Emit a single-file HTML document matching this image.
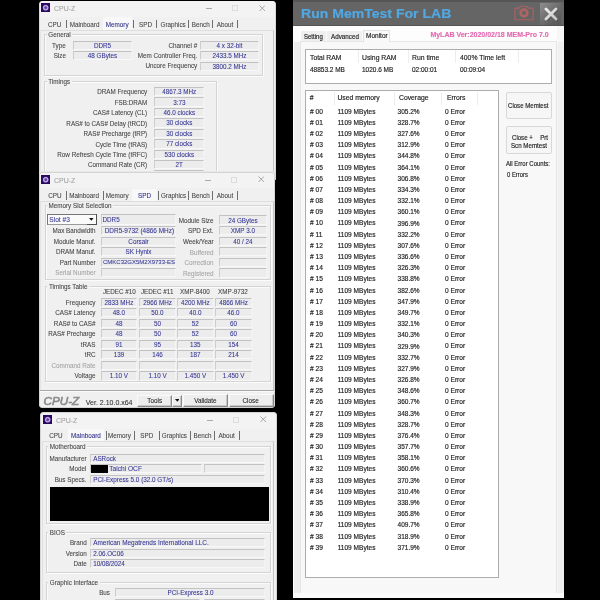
<!DOCTYPE html><html><head><meta charset="utf-8"><style>html,body{margin:0;padding:0;width:600px;height:600px;overflow:hidden;background:#000;}body{position:relative;font-family:"Liberation Sans", sans-serif;}div{position:absolute;box-sizing:border-box;}.t{white-space:nowrap;-webkit-text-stroke:0.07px currentColor;}.m .t{-webkit-text-stroke:0.16px currentColor;}#w{position:absolute;left:0;top:0;width:600px;height:600px;filter:blur(0.35px);will-change:transform;}</style></head><body><div id="w">
<div style="left:39px;top:0.5px;width:237px;height:179.5px;background:#f0f0f0;border-radius:3px 3px 0 0;border:1px solid #d8d8d8;"></div>
<div style="left:39.8px;top:1.2px;width:234.9px;height:15.8px;background:#f3f3f3;border-radius:3px 3px 0 0;"></div>
<svg style="position:absolute;left:40.8px;top:3px" width="9.4" height="9.4" viewBox="0 0 10 10"><rect width="10" height="10" fill="#2a0a5e"/><circle cx="5" cy="5" r="3.1" fill="#7e60bc"/><circle cx="5" cy="5" r="2.3" fill="none" stroke="#d8ccf0" stroke-width="0.9"/><circle cx="5" cy="5" r="1" fill="#5a3aa0"/></svg>
<div class="t" style="left:54px;top:4.25px;font-size:7.0px;line-height:9.1px;color:#a2a2a2;">CPU-Z</div>
<div style="left:205.5px;top:8px;width:6.0px;height:0.8px;background:#a8a8a8;"></div>
<div style="left:231.5px;top:5.2px;width:6.0px;height:6.0px;border:0.8px solid #dcdcdc;"></div>
<svg style="position:absolute;left:258.5px;top:4.5px" width="6.5" height="6.5" viewBox="0 0 7 7"><path d="M0.5 0.5L6.5 6.5M6.5 0.5L0.5 6.5" stroke="#8c8c8c" stroke-width="0.8"/></svg>
<div style="left:103.3px;top:17.3px;width:28.4px;height:12.7px;background:#f8f8f8;"></div>
<div class="t" style="left:48px;top:20.81px;font-size:6.3px;line-height:8.19px;color:#444444;">CPU</div>
<div class="t" style="left:69.7px;top:20.81px;font-size:6.3px;line-height:8.19px;color:#444444;">Mainboard</div>
<div class="t" style="left:105.8px;top:20.81px;font-size:6.3px;line-height:8.19px;color:#2c2c8c;">Memory</div>
<div class="t" style="left:139px;top:20.81px;font-size:6.3px;line-height:8.19px;color:#444444;">SPD</div>
<div class="t" style="left:160.5px;top:20.81px;font-size:6.3px;line-height:8.19px;color:#444444;">Graphics</div>
<div class="t" style="left:191.8px;top:20.81px;font-size:6.3px;line-height:8.19px;color:#444444;">Bench</div>
<div class="t" style="left:216.8px;top:20.81px;font-size:6.3px;line-height:8.19px;color:#444444;">About</div>
<div style="left:65.5px;top:19.9px;width:1.1px;height:8.6px;background:#6e6e6e;"></div>
<div style="left:133px;top:19.9px;width:1.1px;height:8.6px;background:#6e6e6e;"></div>
<div style="left:156px;top:19.9px;width:1.1px;height:8.6px;background:#6e6e6e;"></div>
<div style="left:188px;top:19.9px;width:1.1px;height:8.6px;background:#6e6e6e;"></div>
<div style="left:212.2px;top:19.9px;width:1.1px;height:8.6px;background:#6e6e6e;"></div>
<div style="left:237.3px;top:19.9px;width:1.1px;height:8.6px;background:#6e6e6e;"></div>
<div style="left:40px;top:30px;width:233.5px;height:150px;border-top:1px solid #dedede;border-right:1px solid #c6c6c6;border-left:1px solid #e4e4e4;"></div>
<div style="left:43.7px;top:34.3px;width:219.3px;height:41.8px;border:1px solid #d4d4d4;box-shadow:inset 1px 1px 0 #fbfbfb, 1px 1px 0 #fbfbfb;"></div>
<div class="t" style="left:46.8px;top:31.4px;font-size:6.3px;line-height:8px;color:#444444;background:#f0f0f0;padding:0 1.5px;">General</div>
<div class="t" style="left:52px;top:41.71px;font-size:6.3px;line-height:8.19px;color:#444444;">Type</div>
<div class="t" style="right:534px;top:52.01px;font-size:6.3px;line-height:8.19px;color:#444444;text-align:right;">Size</div>
<div style="left:73px;top:40.5px;width:59px;height:9.3px;background:#ececec;border-top:1px solid #c2c2c2;border-left:1px solid #cdcdcd;border-bottom:1px solid #f8f8f8;border-right:1px solid #f4f4f4;"></div>
<div class="t" style="left:53.0px;width:99px;top:41.66px;font-size:6.3px;line-height:8.19px;color:#363696;text-align:center;">DDR5</div>
<div style="left:73px;top:51px;width:59px;height:9.2px;background:#ececec;border-top:1px solid #c2c2c2;border-left:1px solid #cdcdcd;border-bottom:1px solid #f8f8f8;border-right:1px solid #f4f4f4;"></div>
<div class="t" style="left:53.0px;width:99px;top:52.11px;font-size:6.3px;line-height:8.19px;color:#363696;text-align:center;">48 GBytes</div>
<div class="t" style="right:402.8px;top:42.11px;font-size:6.3px;line-height:8.19px;color:#444444;text-align:right;">Channel #</div>
<div class="t" style="right:402.8px;top:52.3px;font-size:6.3px;line-height:8.19px;color:#444444;text-align:right;">Mem Controller Freq.</div>
<div class="t" style="right:402.8px;top:62.41px;font-size:6.3px;line-height:8.19px;color:#444444;text-align:right;">Uncore Frequency</div>
<div style="left:200px;top:40.7px;width:59px;height:9.3px;background:#ececec;border-top:1px solid #c2c2c2;border-left:1px solid #cdcdcd;border-bottom:1px solid #f8f8f8;border-right:1px solid #f4f4f4;"></div>
<div class="t" style="left:180.0px;width:99px;top:41.86px;font-size:6.3px;line-height:8.19px;color:#363696;text-align:center;">4 x 32-bit</div>
<div style="left:200px;top:51.2px;width:59px;height:9.3px;background:#ececec;border-top:1px solid #c2c2c2;border-left:1px solid #cdcdcd;border-bottom:1px solid #f8f8f8;border-right:1px solid #f4f4f4;"></div>
<div class="t" style="left:180.0px;width:99px;top:52.36px;font-size:6.3px;line-height:8.19px;color:#363696;text-align:center;">2433.5 MHz</div>
<div style="left:200px;top:61.7px;width:59px;height:9.3px;background:#ececec;border-top:1px solid #c2c2c2;border-left:1px solid #cdcdcd;border-bottom:1px solid #f8f8f8;border-right:1px solid #f4f4f4;"></div>
<div class="t" style="left:180.0px;width:99px;top:62.85px;font-size:6.3px;line-height:8.19px;color:#363696;text-align:center;">3800.2 MHz</div>
<div style="left:43.7px;top:81px;width:173.3px;height:119px;border:1px solid #d4d4d4;box-shadow:inset 1px 1px 0 #fbfbfb, 1px 1px 0 #fbfbfb;"></div>
<div class="t" style="left:46.8px;top:78.1px;font-size:6.3px;line-height:8px;color:#444444;background:#f0f0f0;padding:0 1.5px;">Timings</div>
<div class="t" style="right:452.8px;top:88.41px;font-size:6.3px;line-height:8.19px;color:#444444;text-align:right;">DRAM Frequency</div>
<div style="left:154.2px;top:86.9px;width:50.2px;height:9.5px;background:#ececec;border-top:1px solid #c2c2c2;border-left:1px solid #cdcdcd;border-bottom:1px solid #f8f8f8;border-right:1px solid #f4f4f4;"></div>
<div class="t" style="left:134.2px;width:90.20000000000002px;top:88.16px;font-size:6.3px;line-height:8.19px;color:#363696;text-align:center;">4867.3 MHz</div>
<div class="t" style="right:452.8px;top:98.84px;font-size:6.3px;line-height:8.19px;color:#444444;text-align:right;">FSB:DRAM</div>
<div style="left:154.2px;top:97.34px;width:50.2px;height:9.5px;background:#ececec;border-top:1px solid #c2c2c2;border-left:1px solid #cdcdcd;border-bottom:1px solid #f8f8f8;border-right:1px solid #f4f4f4;"></div>
<div class="t" style="left:134.2px;width:90.20000000000002px;top:98.59px;font-size:6.3px;line-height:8.19px;color:#363696;text-align:center;">3:73</div>
<div class="t" style="right:452.8px;top:109.28px;font-size:6.3px;line-height:8.19px;color:#444444;text-align:right;">CAS# Latency (CL)</div>
<div style="left:154.2px;top:107.78px;width:50.2px;height:9.5px;background:#ececec;border-top:1px solid #c2c2c2;border-left:1px solid #cdcdcd;border-bottom:1px solid #f8f8f8;border-right:1px solid #f4f4f4;"></div>
<div class="t" style="left:134.2px;width:90.20000000000002px;top:109.03px;font-size:6.3px;line-height:8.19px;color:#363696;text-align:center;">46.0 clocks</div>
<div class="t" style="right:452.8px;top:119.72px;font-size:6.3px;line-height:8.19px;color:#444444;text-align:right;">RAS# to CAS# Delay (tRCD)</div>
<div style="left:154.2px;top:118.22px;width:50.2px;height:9.5px;background:#ececec;border-top:1px solid #c2c2c2;border-left:1px solid #cdcdcd;border-bottom:1px solid #f8f8f8;border-right:1px solid #f4f4f4;"></div>
<div class="t" style="left:134.2px;width:90.20000000000002px;top:119.47px;font-size:6.3px;line-height:8.19px;color:#363696;text-align:center;">30 clocks</div>
<div class="t" style="right:452.8px;top:130.16px;font-size:6.3px;line-height:8.19px;color:#444444;text-align:right;">RAS# Precharge (tRP)</div>
<div style="left:154.2px;top:128.66px;width:50.2px;height:9.5px;background:#ececec;border-top:1px solid #c2c2c2;border-left:1px solid #cdcdcd;border-bottom:1px solid #f8f8f8;border-right:1px solid #f4f4f4;"></div>
<div class="t" style="left:134.2px;width:90.20000000000002px;top:129.91px;font-size:6.3px;line-height:8.19px;color:#363696;text-align:center;">30 clocks</div>
<div class="t" style="right:452.8px;top:140.6px;font-size:6.3px;line-height:8.19px;color:#444444;text-align:right;">Cycle Time (tRAS)</div>
<div style="left:154.2px;top:139.1px;width:50.2px;height:9.5px;background:#ececec;border-top:1px solid #c2c2c2;border-left:1px solid #cdcdcd;border-bottom:1px solid #f8f8f8;border-right:1px solid #f4f4f4;"></div>
<div class="t" style="left:134.2px;width:90.20000000000002px;top:140.35px;font-size:6.3px;line-height:8.19px;color:#363696;text-align:center;">77 clocks</div>
<div class="t" style="right:452.8px;top:151.05px;font-size:6.3px;line-height:8.19px;color:#444444;text-align:right;">Row Refresh Cycle Time (tRFC)</div>
<div style="left:154.2px;top:149.54px;width:50.2px;height:9.5px;background:#ececec;border-top:1px solid #c2c2c2;border-left:1px solid #cdcdcd;border-bottom:1px solid #f8f8f8;border-right:1px solid #f4f4f4;"></div>
<div class="t" style="left:134.2px;width:90.20000000000002px;top:150.8px;font-size:6.3px;line-height:8.19px;color:#363696;text-align:center;">530 clocks</div>
<div class="t" style="right:452.8px;top:161.49px;font-size:6.3px;line-height:8.19px;color:#444444;text-align:right;">Command Rate (CR)</div>
<div style="left:154.2px;top:159.98px;width:50.2px;height:9.5px;background:#ececec;border-top:1px solid #c2c2c2;border-left:1px solid #cdcdcd;border-bottom:1px solid #f8f8f8;border-right:1px solid #f4f4f4;"></div>
<div class="t" style="left:134.2px;width:90.20000000000002px;top:161.24px;font-size:6.3px;line-height:8.19px;color:#363696;text-align:center;">2T</div>
<div style="left:154.2px;top:170.42px;width:50.2px;height:9.5px;background:#ececec;border-top:1px solid #c2c2c2;border-left:1px solid #cdcdcd;border-bottom:1px solid #f8f8f8;border-right:1px solid #f4f4f4;"></div>
<div style="left:39px;top:172px;width:235.8px;height:236px;background:#f0f0f0;border-radius:3px;border:1px solid #d4d4d4;box-shadow:0 -1px 0 #e8e8e8;"></div>
<div style="left:39.8px;top:172.8px;width:234.2px;height:15.7px;background:#f3f3f3;border-radius:3px 3px 0 0;"></div>
<svg style="position:absolute;left:40.8px;top:174.5px" width="9.4" height="9.4" viewBox="0 0 10 10"><rect width="10" height="10" fill="#2a0a5e"/><circle cx="5" cy="5" r="3.1" fill="#7e60bc"/><circle cx="5" cy="5" r="2.3" fill="none" stroke="#d8ccf0" stroke-width="0.9"/><circle cx="5" cy="5" r="1" fill="#5a3aa0"/></svg>
<div class="t" style="left:54px;top:175.75px;font-size:7.0px;line-height:9.1px;color:#a2a2a2;">CPU-Z</div>
<div style="left:204.8px;top:179.5px;width:6.0px;height:0.8px;background:#a8a8a8;"></div>
<div style="left:230.8px;top:176.7px;width:6.0px;height:6.0px;border:0.8px solid #dcdcdc;"></div>
<svg style="position:absolute;left:257.8px;top:176.0px" width="6.5" height="6.5" viewBox="0 0 7 7"><path d="M0.5 0.5L6.5 6.5M6.5 0.5L0.5 6.5" stroke="#8c8c8c" stroke-width="0.8"/></svg>
<div style="left:132.2px;top:188.5px;width:24.5px;height:12.8px;background:#f8f8f8;"></div>
<div class="t" style="left:48.2px;top:192.1px;font-size:6.3px;line-height:8.19px;color:#444444;">CPU</div>
<div class="t" style="left:69.2px;top:192.1px;font-size:6.3px;line-height:8.19px;color:#444444;">Mainboard</div>
<div class="t" style="left:105.8px;top:192.1px;font-size:6.3px;line-height:8.19px;color:#444444;">Memory</div>
<div class="t" style="left:138px;top:192.1px;font-size:6.3px;line-height:8.19px;color:#2c2c8c;">SPD</div>
<div class="t" style="left:160.9px;top:192.1px;font-size:6.3px;line-height:8.19px;color:#444444;">Graphics</div>
<div class="t" style="left:191.8px;top:192.1px;font-size:6.3px;line-height:8.19px;color:#444444;">Bench</div>
<div class="t" style="left:216.8px;top:192.1px;font-size:6.3px;line-height:8.19px;color:#444444;">About</div>
<div style="left:66.4px;top:191.2px;width:1.1px;height:8.6px;background:#6e6e6e;"></div>
<div style="left:103px;top:191.2px;width:1.1px;height:8.6px;background:#6e6e6e;"></div>
<div style="left:157.8px;top:191.2px;width:1.1px;height:8.6px;background:#6e6e6e;"></div>
<div style="left:188px;top:191.2px;width:1.1px;height:8.6px;background:#6e6e6e;"></div>
<div style="left:212.2px;top:191.2px;width:1.1px;height:8.6px;background:#6e6e6e;"></div>
<div style="left:237.3px;top:191.2px;width:1.1px;height:8.6px;background:#6e6e6e;"></div>
<div style="left:40px;top:201.3px;width:233.7px;height:189.2px;border-top:1px solid #dedede;border-right:1px solid #c6c6c6;border-left:1px solid #e4e4e4;"></div>
<div style="left:44.7px;top:205.3px;width:225.9px;height:74.7px;border:1px solid #d4d4d4;box-shadow:inset 1px 1px 0 #fbfbfb, 1px 1px 0 #fbfbfb;"></div>
<div class="t" style="left:47.0px;top:202.4px;font-size:6.3px;line-height:8px;color:#444444;background:#f0f0f0;padding:0 1.5px;">Memory Slot Selection</div>
<div style="left:47px;top:213.5px;width:50.2px;height:11.6px;background:#fafafa;border:1px solid #767676;border-bottom-color:#9a9a9a;"></div>
<div style="left:86.7px;top:223.6px;width:10.5px;height:1.5px;background:#505050;"></div>
<div style="left:96px;top:213.5px;width:1.2px;height:11.6px;background:#505050;"></div>
<svg style="position:absolute;left:89.3px;top:218.3px" width="4.6" height="2.8" viewBox="0 0 5 3"><path d="M0 0H5L2.5 3Z" fill="#111"/></svg>
<div class="t" style="left:49.3px;top:215.81px;font-size:6.6px;line-height:8.58px;color:#363696;">Slot #3</div>
<div style="left:100.7px;top:214.2px;width:75.8px;height:10.5px;background:#ececec;border-top:1px solid #c2c2c2;border-left:1px solid #cdcdcd;border-bottom:1px solid #f8f8f8;border-right:1px solid #f4f4f4;"></div>
<div class="t" style="left:102.5px;top:215.95px;font-size:6.3px;line-height:8.19px;color:#363696;">DDR5</div>
<div class="t" style="right:504.5px;top:227.31px;font-size:6.3px;line-height:8.19px;color:#444444;text-align:right;">Max Bandwidth</div>
<div style="left:101.1px;top:226.2px;width:75.4px;height:9.2px;background:#ececec;border-top:1px solid #c2c2c2;border-left:1px solid #cdcdcd;border-bottom:1px solid #f8f8f8;border-right:1px solid #f4f4f4;"></div>
<div class="t" style="left:104.7px;top:227.21px;font-size:6.45px;line-height:8.38px;color:#363696;">DDR5-9732 (4866 MHz)</div>
<div class="t" style="right:504.5px;top:237.81px;font-size:6.3px;line-height:8.19px;color:#444444;text-align:right;">Module Manuf.</div>
<div style="left:101.1px;top:236.7px;width:75.4px;height:9.2px;background:#ececec;border-top:1px solid #c2c2c2;border-left:1px solid #cdcdcd;border-bottom:1px solid #f8f8f8;border-right:1px solid #f4f4f4;"></div>
<div class="t" style="left:80.8px;width:115.4px;top:237.81px;font-size:6.3px;line-height:8.19px;color:#363696;text-align:center;">Corsair</div>
<div class="t" style="right:504.5px;top:248.31px;font-size:6.3px;line-height:8.19px;color:#444444;text-align:right;">DRAM Manuf.</div>
<div style="left:101.1px;top:247.2px;width:75.4px;height:9.2px;background:#ececec;border-top:1px solid #c2c2c2;border-left:1px solid #cdcdcd;border-bottom:1px solid #f8f8f8;border-right:1px solid #f4f4f4;"></div>
<div class="t" style="left:80.8px;width:115.4px;top:248.31px;font-size:6.3px;line-height:8.19px;color:#363696;text-align:center;">SK Hynix</div>
<div class="t" style="right:504.5px;top:258.81px;font-size:6.3px;line-height:8.19px;color:#444444;text-align:right;">Part Number</div>
<div style="left:101.1px;top:257.7px;width:75.4px;height:9.2px;background:#ececec;border-top:1px solid #c2c2c2;border-left:1px solid #cdcdcd;border-bottom:1px solid #f8f8f8;border-right:1px solid #f4f4f4;"></div>
<div class="t" style="left:103px;top:259.0px;font-size:6.0px;line-height:7.8px;color:#363696;">CMKC32GX5M2X9733-ES</div>
<div class="t" style="right:504.5px;top:269.31px;font-size:6.3px;line-height:8.19px;color:#a4a4a4;text-align:right;">Serial Number</div>
<div style="left:101.1px;top:268.2px;width:75.4px;height:9.2px;background:#ececec;border-top:1px solid #c2c2c2;border-left:1px solid #cdcdcd;border-bottom:1px solid #f8f8f8;border-right:1px solid #f4f4f4;"></div>
<div class="t" style="right:386.5px;top:216.7px;font-size:6.3px;line-height:8.19px;color:#444444;text-align:right;">Module Size</div>
<div style="left:218.6px;top:215.4px;width:48.6px;height:9.2px;background:#ececec;border-top:1px solid #c2c2c2;border-left:1px solid #cdcdcd;border-bottom:1px solid #f8f8f8;border-right:1px solid #f4f4f4;"></div>
<div class="t" style="left:198.6px;width:88.6px;top:216.5px;font-size:6.3px;line-height:8.19px;color:#363696;text-align:center;">24 GBytes</div>
<div class="t" style="right:386.5px;top:227.3px;font-size:6.3px;line-height:8.19px;color:#444444;text-align:right;">SPD Ext.</div>
<div style="left:218.6px;top:226.0px;width:48.6px;height:9.2px;background:#ececec;border-top:1px solid #c2c2c2;border-left:1px solid #cdcdcd;border-bottom:1px solid #f8f8f8;border-right:1px solid #f4f4f4;"></div>
<div class="t" style="left:198.6px;width:88.6px;top:227.1px;font-size:6.3px;line-height:8.19px;color:#363696;text-align:center;">XMP 3.0</div>
<div class="t" style="right:386.5px;top:237.9px;font-size:6.3px;line-height:8.19px;color:#444444;text-align:right;">Week/Year</div>
<div style="left:218.6px;top:236.6px;width:48.6px;height:9.2px;background:#ececec;border-top:1px solid #c2c2c2;border-left:1px solid #cdcdcd;border-bottom:1px solid #f8f8f8;border-right:1px solid #f4f4f4;"></div>
<div class="t" style="left:198.6px;width:88.6px;top:237.7px;font-size:6.3px;line-height:8.19px;color:#363696;text-align:center;">40 / 24</div>
<div class="t" style="right:386.5px;top:248.5px;font-size:6.3px;line-height:8.19px;color:#a4a4a4;text-align:right;">Buffered</div>
<div style="left:218.6px;top:247.2px;width:48.6px;height:9.2px;background:#ececec;border-top:1px solid #c2c2c2;border-left:1px solid #cdcdcd;border-bottom:1px solid #f8f8f8;border-right:1px solid #f4f4f4;"></div>
<div class="t" style="right:386.5px;top:259.1px;font-size:6.3px;line-height:8.19px;color:#a4a4a4;text-align:right;">Correction</div>
<div style="left:218.6px;top:257.8px;width:48.6px;height:9.2px;background:#ececec;border-top:1px solid #c2c2c2;border-left:1px solid #cdcdcd;border-bottom:1px solid #f8f8f8;border-right:1px solid #f4f4f4;"></div>
<div class="t" style="right:386.5px;top:269.7px;font-size:6.3px;line-height:8.19px;color:#a4a4a4;text-align:right;">Registered</div>
<div style="left:218.6px;top:268.4px;width:48.6px;height:9.2px;background:#ececec;border-top:1px solid #c2c2c2;border-left:1px solid #cdcdcd;border-bottom:1px solid #f8f8f8;border-right:1px solid #f4f4f4;"></div>
<div style="left:44.7px;top:285.6px;width:225.9px;height:96.6px;border:1px solid #d4d4d4;box-shadow:inset 1px 1px 0 #fbfbfb, 1px 1px 0 #fbfbfb;"></div>
<div class="t" style="left:47.4px;top:282.7px;font-size:6.3px;line-height:8px;color:#444444;background:#f0f0f0;padding:0 1.5px;">Timings Table</div>
<div class="t" style="left:89.4px;width:60px;top:288.2px;font-size:6.3px;line-height:8.19px;color:#444444;text-align:center;">JEDEC #10</div>
<div class="t" style="left:127.2px;width:60px;top:288.2px;font-size:6.3px;line-height:8.19px;color:#444444;text-align:center;">JEDEC #11</div>
<div class="t" style="left:165.0px;width:60px;top:288.2px;font-size:6.3px;line-height:8.19px;color:#444444;text-align:center;">XMP-8400</div>
<div class="t" style="left:203.0px;width:60px;top:288.2px;font-size:6.3px;line-height:8.19px;color:#444444;text-align:center;">XMP-9732</div>
<div class="t" style="right:504.5px;top:298.7px;font-size:6.3px;line-height:8.19px;color:#444444;text-align:right;">Frequency</div>
<div style="left:101.1px;top:297.7px;width:35.7px;height:9.1px;background:#ececec;border-top:1px solid #c2c2c2;border-left:1px solid #cdcdcd;border-bottom:1px solid #f8f8f8;border-right:1px solid #f4f4f4;"></div>
<div class="t" style="left:81.1px;width:75.70000000000002px;top:298.75px;font-size:6.3px;line-height:8.19px;color:#363696;text-align:center;">2833 MHz</div>
<div style="left:139.2px;top:297.7px;width:36.6px;height:9.1px;background:#ececec;border-top:1px solid #c2c2c2;border-left:1px solid #cdcdcd;border-bottom:1px solid #f8f8f8;border-right:1px solid #f4f4f4;"></div>
<div class="t" style="left:119.2px;width:76.60000000000002px;top:298.75px;font-size:6.3px;line-height:8.19px;color:#363696;text-align:center;">2966 MHz</div>
<div style="left:177px;top:297.7px;width:36.7px;height:9.1px;background:#ececec;border-top:1px solid #c2c2c2;border-left:1px solid #cdcdcd;border-bottom:1px solid #f8f8f8;border-right:1px solid #f4f4f4;"></div>
<div class="t" style="left:157.0px;width:76.69999999999999px;top:298.75px;font-size:6.3px;line-height:8.19px;color:#363696;text-align:center;">4200 MHz</div>
<div style="left:215px;top:297.7px;width:37px;height:9.1px;background:#ececec;border-top:1px solid #c2c2c2;border-left:1px solid #cdcdcd;border-bottom:1px solid #f8f8f8;border-right:1px solid #f4f4f4;"></div>
<div class="t" style="left:195.0px;width:77px;top:298.75px;font-size:6.3px;line-height:8.19px;color:#363696;text-align:center;">4866 MHz</div>
<div class="t" style="right:504.5px;top:309.23px;font-size:6.3px;line-height:8.19px;color:#444444;text-align:right;">CAS# Latency</div>
<div style="left:101.1px;top:308.23px;width:35.7px;height:9.1px;background:#ececec;border-top:1px solid #c2c2c2;border-left:1px solid #cdcdcd;border-bottom:1px solid #f8f8f8;border-right:1px solid #f4f4f4;"></div>
<div class="t" style="left:81.1px;width:75.70000000000002px;top:309.28px;font-size:6.3px;line-height:8.19px;color:#363696;text-align:center;">48.0</div>
<div style="left:139.2px;top:308.23px;width:36.6px;height:9.1px;background:#ececec;border-top:1px solid #c2c2c2;border-left:1px solid #cdcdcd;border-bottom:1px solid #f8f8f8;border-right:1px solid #f4f4f4;"></div>
<div class="t" style="left:119.2px;width:76.60000000000002px;top:309.28px;font-size:6.3px;line-height:8.19px;color:#363696;text-align:center;">50.0</div>
<div style="left:177px;top:308.23px;width:36.7px;height:9.1px;background:#ececec;border-top:1px solid #c2c2c2;border-left:1px solid #cdcdcd;border-bottom:1px solid #f8f8f8;border-right:1px solid #f4f4f4;"></div>
<div class="t" style="left:157.0px;width:76.69999999999999px;top:309.28px;font-size:6.3px;line-height:8.19px;color:#363696;text-align:center;">40.0</div>
<div style="left:215px;top:308.23px;width:37px;height:9.1px;background:#ececec;border-top:1px solid #c2c2c2;border-left:1px solid #cdcdcd;border-bottom:1px solid #f8f8f8;border-right:1px solid #f4f4f4;"></div>
<div class="t" style="left:195.0px;width:77px;top:309.28px;font-size:6.3px;line-height:8.19px;color:#363696;text-align:center;">46.0</div>
<div class="t" style="right:504.5px;top:319.76px;font-size:6.3px;line-height:8.19px;color:#444444;text-align:right;">RAS# to CAS#</div>
<div style="left:101.1px;top:318.76px;width:35.7px;height:9.1px;background:#ececec;border-top:1px solid #c2c2c2;border-left:1px solid #cdcdcd;border-bottom:1px solid #f8f8f8;border-right:1px solid #f4f4f4;"></div>
<div class="t" style="left:81.1px;width:75.70000000000002px;top:319.81px;font-size:6.3px;line-height:8.19px;color:#363696;text-align:center;">48</div>
<div style="left:139.2px;top:318.76px;width:36.6px;height:9.1px;background:#ececec;border-top:1px solid #c2c2c2;border-left:1px solid #cdcdcd;border-bottom:1px solid #f8f8f8;border-right:1px solid #f4f4f4;"></div>
<div class="t" style="left:119.2px;width:76.60000000000002px;top:319.81px;font-size:6.3px;line-height:8.19px;color:#363696;text-align:center;">50</div>
<div style="left:177px;top:318.76px;width:36.7px;height:9.1px;background:#ececec;border-top:1px solid #c2c2c2;border-left:1px solid #cdcdcd;border-bottom:1px solid #f8f8f8;border-right:1px solid #f4f4f4;"></div>
<div class="t" style="left:157.0px;width:76.69999999999999px;top:319.81px;font-size:6.3px;line-height:8.19px;color:#363696;text-align:center;">52</div>
<div style="left:215px;top:318.76px;width:37px;height:9.1px;background:#ececec;border-top:1px solid #c2c2c2;border-left:1px solid #cdcdcd;border-bottom:1px solid #f8f8f8;border-right:1px solid #f4f4f4;"></div>
<div class="t" style="left:195.0px;width:77px;top:319.81px;font-size:6.3px;line-height:8.19px;color:#363696;text-align:center;">60</div>
<div class="t" style="right:504.5px;top:330.29px;font-size:6.3px;line-height:8.19px;color:#444444;text-align:right;">RAS# Precharge</div>
<div style="left:101.1px;top:329.29px;width:35.7px;height:9.1px;background:#ececec;border-top:1px solid #c2c2c2;border-left:1px solid #cdcdcd;border-bottom:1px solid #f8f8f8;border-right:1px solid #f4f4f4;"></div>
<div class="t" style="left:81.1px;width:75.70000000000002px;top:330.34px;font-size:6.3px;line-height:8.19px;color:#363696;text-align:center;">48</div>
<div style="left:139.2px;top:329.29px;width:36.6px;height:9.1px;background:#ececec;border-top:1px solid #c2c2c2;border-left:1px solid #cdcdcd;border-bottom:1px solid #f8f8f8;border-right:1px solid #f4f4f4;"></div>
<div class="t" style="left:119.2px;width:76.60000000000002px;top:330.34px;font-size:6.3px;line-height:8.19px;color:#363696;text-align:center;">50</div>
<div style="left:177px;top:329.29px;width:36.7px;height:9.1px;background:#ececec;border-top:1px solid #c2c2c2;border-left:1px solid #cdcdcd;border-bottom:1px solid #f8f8f8;border-right:1px solid #f4f4f4;"></div>
<div class="t" style="left:157.0px;width:76.69999999999999px;top:330.34px;font-size:6.3px;line-height:8.19px;color:#363696;text-align:center;">52</div>
<div style="left:215px;top:329.29px;width:37px;height:9.1px;background:#ececec;border-top:1px solid #c2c2c2;border-left:1px solid #cdcdcd;border-bottom:1px solid #f8f8f8;border-right:1px solid #f4f4f4;"></div>
<div class="t" style="left:195.0px;width:77px;top:330.34px;font-size:6.3px;line-height:8.19px;color:#363696;text-align:center;">60</div>
<div class="t" style="right:504.5px;top:340.82px;font-size:6.3px;line-height:8.19px;color:#444444;text-align:right;">tRAS</div>
<div style="left:101.1px;top:339.82px;width:35.7px;height:9.1px;background:#ececec;border-top:1px solid #c2c2c2;border-left:1px solid #cdcdcd;border-bottom:1px solid #f8f8f8;border-right:1px solid #f4f4f4;"></div>
<div class="t" style="left:81.1px;width:75.70000000000002px;top:340.88px;font-size:6.3px;line-height:8.19px;color:#363696;text-align:center;">91</div>
<div style="left:139.2px;top:339.82px;width:36.6px;height:9.1px;background:#ececec;border-top:1px solid #c2c2c2;border-left:1px solid #cdcdcd;border-bottom:1px solid #f8f8f8;border-right:1px solid #f4f4f4;"></div>
<div class="t" style="left:119.2px;width:76.60000000000002px;top:340.88px;font-size:6.3px;line-height:8.19px;color:#363696;text-align:center;">95</div>
<div style="left:177px;top:339.82px;width:36.7px;height:9.1px;background:#ececec;border-top:1px solid #c2c2c2;border-left:1px solid #cdcdcd;border-bottom:1px solid #f8f8f8;border-right:1px solid #f4f4f4;"></div>
<div class="t" style="left:157.0px;width:76.69999999999999px;top:340.88px;font-size:6.3px;line-height:8.19px;color:#363696;text-align:center;">135</div>
<div style="left:215px;top:339.82px;width:37px;height:9.1px;background:#ececec;border-top:1px solid #c2c2c2;border-left:1px solid #cdcdcd;border-bottom:1px solid #f8f8f8;border-right:1px solid #f4f4f4;"></div>
<div class="t" style="left:195.0px;width:77px;top:340.88px;font-size:6.3px;line-height:8.19px;color:#363696;text-align:center;">154</div>
<div class="t" style="right:504.5px;top:351.35px;font-size:6.3px;line-height:8.19px;color:#444444;text-align:right;">tRC</div>
<div style="left:101.1px;top:350.35px;width:35.7px;height:9.1px;background:#ececec;border-top:1px solid #c2c2c2;border-left:1px solid #cdcdcd;border-bottom:1px solid #f8f8f8;border-right:1px solid #f4f4f4;"></div>
<div class="t" style="left:81.1px;width:75.70000000000002px;top:351.4px;font-size:6.3px;line-height:8.19px;color:#363696;text-align:center;">139</div>
<div style="left:139.2px;top:350.35px;width:36.6px;height:9.1px;background:#ececec;border-top:1px solid #c2c2c2;border-left:1px solid #cdcdcd;border-bottom:1px solid #f8f8f8;border-right:1px solid #f4f4f4;"></div>
<div class="t" style="left:119.2px;width:76.60000000000002px;top:351.4px;font-size:6.3px;line-height:8.19px;color:#363696;text-align:center;">146</div>
<div style="left:177px;top:350.35px;width:36.7px;height:9.1px;background:#ececec;border-top:1px solid #c2c2c2;border-left:1px solid #cdcdcd;border-bottom:1px solid #f8f8f8;border-right:1px solid #f4f4f4;"></div>
<div class="t" style="left:157.0px;width:76.69999999999999px;top:351.4px;font-size:6.3px;line-height:8.19px;color:#363696;text-align:center;">187</div>
<div style="left:215px;top:350.35px;width:37px;height:9.1px;background:#ececec;border-top:1px solid #c2c2c2;border-left:1px solid #cdcdcd;border-bottom:1px solid #f8f8f8;border-right:1px solid #f4f4f4;"></div>
<div class="t" style="left:195.0px;width:77px;top:351.4px;font-size:6.3px;line-height:8.19px;color:#363696;text-align:center;">214</div>
<div class="t" style="right:504.5px;top:361.88px;font-size:6.3px;line-height:8.19px;color:#a4a4a4;text-align:right;">Command Rate</div>
<div style="left:101.1px;top:360.88px;width:35.7px;height:9.1px;background:#ececec;border-top:1px solid #c2c2c2;border-left:1px solid #cdcdcd;border-bottom:1px solid #f8f8f8;border-right:1px solid #f4f4f4;"></div>
<div style="left:139.2px;top:360.88px;width:36.6px;height:9.1px;background:#ececec;border-top:1px solid #c2c2c2;border-left:1px solid #cdcdcd;border-bottom:1px solid #f8f8f8;border-right:1px solid #f4f4f4;"></div>
<div style="left:177px;top:360.88px;width:36.7px;height:9.1px;background:#ececec;border-top:1px solid #c2c2c2;border-left:1px solid #cdcdcd;border-bottom:1px solid #f8f8f8;border-right:1px solid #f4f4f4;"></div>
<div style="left:215px;top:360.88px;width:37px;height:9.1px;background:#ececec;border-top:1px solid #c2c2c2;border-left:1px solid #cdcdcd;border-bottom:1px solid #f8f8f8;border-right:1px solid #f4f4f4;"></div>
<div class="t" style="right:504.5px;top:372.41px;font-size:6.3px;line-height:8.19px;color:#444444;text-align:right;">Voltage</div>
<div style="left:101.1px;top:371.41px;width:35.7px;height:9.1px;background:#ececec;border-top:1px solid #c2c2c2;border-left:1px solid #cdcdcd;border-bottom:1px solid #f8f8f8;border-right:1px solid #f4f4f4;"></div>
<div class="t" style="left:81.1px;width:75.70000000000002px;top:372.46px;font-size:6.3px;line-height:8.19px;color:#363696;text-align:center;">1.10 V</div>
<div style="left:139.2px;top:371.41px;width:36.6px;height:9.1px;background:#ececec;border-top:1px solid #c2c2c2;border-left:1px solid #cdcdcd;border-bottom:1px solid #f8f8f8;border-right:1px solid #f4f4f4;"></div>
<div class="t" style="left:119.2px;width:76.60000000000002px;top:372.46px;font-size:6.3px;line-height:8.19px;color:#363696;text-align:center;">1.10 V</div>
<div style="left:177px;top:371.41px;width:36.7px;height:9.1px;background:#ececec;border-top:1px solid #c2c2c2;border-left:1px solid #cdcdcd;border-bottom:1px solid #f8f8f8;border-right:1px solid #f4f4f4;"></div>
<div class="t" style="left:157.0px;width:76.69999999999999px;top:372.46px;font-size:6.3px;line-height:8.19px;color:#363696;text-align:center;">1.450 V</div>
<div style="left:215px;top:371.41px;width:37px;height:9.1px;background:#ececec;border-top:1px solid #c2c2c2;border-left:1px solid #cdcdcd;border-bottom:1px solid #f8f8f8;border-right:1px solid #f4f4f4;"></div>
<div class="t" style="left:195.0px;width:77px;top:372.46px;font-size:6.3px;line-height:8.19px;color:#363696;text-align:center;">1.450 V</div>
<div style="left:40px;top:390px;width:233.8px;height:1.2px;background:#a8a8a8;"></div>
<div style="left:40px;top:391.2px;width:233.8px;height:0.8px;background:#fafafa;"></div>
<div class="t" style="left:43.5px;top:392.8px;font-size:11.7px;line-height:15.21px;color:#8a8a8a;font-style:italic;-webkit-text-stroke:0.6px #8a8a8a;">CPU-Z</div>
<div class="t" style="left:85.8px;top:397.95px;font-size:7.0px;line-height:9.1px;color:#303030;">Ver. 2.10.0.x64</div>
<div style="left:137.2px;top:394.5px;width:34.7px;height:12.3px;background:#ededed;border:1px solid #fafafa;border-bottom:1.2px solid #8a8a8a;border-right:1.2px solid #8a8a8a;box-shadow:inset -1px -1px 0 #c8c8c8;"></div>
<div class="t" style="left:127.35px;width:54.70000000000002px;top:397.15px;font-size:6.3px;line-height:8.19px;color:#222;text-align:center;">Tools</div>
<div style="left:171.9px;top:394.5px;width:9.8px;height:12.3px;background:#ededed;border:1px solid #fafafa;border-bottom:1.2px solid #8a8a8a;border-right:1.2px solid #8a8a8a;box-shadow:inset -1px -1px 0 #c8c8c8;"></div>
<svg style="position:absolute;left:174.5px;top:399.2px" width="4.6" height="2.8" viewBox="0 0 5 3"><path d="M0 0H5L2.5 3Z" fill="#111"/></svg>
<div style="left:183.4px;top:394px;width:44.2px;height:12.8px;background:#ededed;border:1px solid #fafafa;border-bottom:1.2px solid #8a8a8a;border-right:1.2px solid #8a8a8a;box-shadow:inset -1px -1px 0 #c8c8c8;"></div>
<div class="t" style="left:173.4px;width:64.19999999999999px;top:396.9px;font-size:6.3px;line-height:8.19px;color:#222;text-align:center;">Validate</div>
<div style="left:228.9px;top:394px;width:44.9px;height:12.8px;background:#ededed;border:1px solid #fafafa;border-bottom:1.2px solid #8a8a8a;border-right:1.2px solid #8a8a8a;box-shadow:inset -1px -1px 0 #c8c8c8;"></div>
<div class="t" style="left:218.15px;width:64.9px;top:396.9px;font-size:6.3px;line-height:8.19px;color:#222;text-align:center;">Close</div>
<div style="left:40px;top:412.3px;width:236.5px;height:207.7px;background:#f0f0f0;border-radius:3px 3px 0 0;border:1px solid #d4d4d4;"></div>
<div style="left:40.8px;top:413px;width:234.9px;height:15.5px;background:#f3f3f3;border-radius:3px 3px 0 0;"></div>
<svg style="position:absolute;left:42.8px;top:414.5px" width="9.4" height="9.4" viewBox="0 0 10 10"><rect width="10" height="10" fill="#2a0a5e"/><circle cx="5" cy="5" r="3.1" fill="#7e60bc"/><circle cx="5" cy="5" r="2.3" fill="none" stroke="#d8ccf0" stroke-width="0.9"/><circle cx="5" cy="5" r="1" fill="#5a3aa0"/></svg>
<div class="t" style="left:56px;top:415.75px;font-size:7.0px;line-height:9.1px;color:#a2a2a2;">CPU-Z</div>
<div style="left:207px;top:419.5px;width:6px;height:0.8px;background:#a8a8a8;"></div>
<div style="left:233px;top:416.7px;width:6px;height:6.0px;border:0.8px solid #dcdcdc;"></div>
<svg style="position:absolute;left:260px;top:416.0px" width="6.5" height="6.5" viewBox="0 0 7 7"><path d="M0.5 0.5L6.5 6.5M6.5 0.5L0.5 6.5" stroke="#8c8c8c" stroke-width="0.8"/></svg>
<div style="left:68px;top:428.5px;width:36.2px;height:12.8px;background:#f8f8f8;"></div>
<div class="t" style="left:49.3px;top:432.0px;font-size:6.3px;line-height:8.19px;color:#444444;">CPU</div>
<div class="t" style="left:71px;top:432.0px;font-size:6.3px;line-height:8.19px;color:#2c2c8c;">Mainboard</div>
<div class="t" style="left:108.1px;top:432.0px;font-size:6.3px;line-height:8.19px;color:#444444;">Memory</div>
<div class="t" style="left:140.3px;top:432.0px;font-size:6.3px;line-height:8.19px;color:#444444;">SPD</div>
<div class="t" style="left:161.8px;top:432.0px;font-size:6.3px;line-height:8.19px;color:#444444;">Graphics</div>
<div class="t" style="left:193.6px;top:432.0px;font-size:6.3px;line-height:8.19px;color:#444444;">Bench</div>
<div class="t" style="left:218.4px;top:432.0px;font-size:6.3px;line-height:8.19px;color:#444444;">About</div>
<div style="left:105.8px;top:431.1px;width:1.1px;height:8.6px;background:#6e6e6e;"></div>
<div style="left:133.8px;top:431.1px;width:1.1px;height:8.6px;background:#6e6e6e;"></div>
<div style="left:159px;top:431.1px;width:1.1px;height:8.6px;background:#6e6e6e;"></div>
<div style="left:190px;top:431.1px;width:1.1px;height:8.6px;background:#6e6e6e;"></div>
<div style="left:214.4px;top:431.1px;width:1.1px;height:8.6px;background:#6e6e6e;"></div>
<div style="left:239px;top:431.1px;width:1.1px;height:8.6px;background:#6e6e6e;"></div>
<div style="left:42.3px;top:441px;width:232.0px;height:179px;border-top:1px solid #dedede;border-right:1px solid #c6c6c6;border-left:1px solid #e0e0e0;"></div>
<div style="left:45.8px;top:446.3px;width:225.2px;height:77.7px;border:1px solid #d4d4d4;box-shadow:inset 1px 1px 0 #fbfbfb, 1px 1px 0 #fbfbfb;"></div>
<div class="t" style="left:48.3px;top:443.4px;font-size:6.3px;line-height:8px;color:#444444;background:#f0f0f0;padding:0 1.5px;">Motherboard</div>
<div class="t" style="right:513.5px;top:455.0px;font-size:6.3px;line-height:8.19px;color:#444444;text-align:right;">Manufacturer</div>
<div style="left:90.2px;top:453.8px;width:174.8px;height:9.4px;background:#ececec;border-top:1px solid #c2c2c2;border-left:1px solid #cdcdcd;border-bottom:1px solid #f8f8f8;border-right:1px solid #f4f4f4;"></div>
<div class="t" style="left:93.2px;top:455.0px;font-size:6.3px;line-height:8.19px;color:#363696;">ASRock</div>
<div class="t" style="right:513.5px;top:465.11px;font-size:6.3px;line-height:8.19px;color:#444444;text-align:right;">Model</div>
<div style="left:90.2px;top:464.2px;width:112.3px;height:9.3px;background:#ececec;border-top:1px solid #c2c2c2;border-left:1px solid #cdcdcd;border-bottom:1px solid #f8f8f8;border-right:1px solid #f4f4f4;"></div>
<div style="left:90.9px;top:465.1px;width:16.8px;height:7.7px;background:#000;"></div>
<div class="t" style="left:109.3px;top:465.11px;font-size:6.6px;line-height:8.58px;color:#363696;">Taichi OCF</div>
<div style="left:203.6px;top:464.2px;width:61.4px;height:9.3px;background:#ececec;border-top:1px solid #c2c2c2;border-left:1px solid #cdcdcd;border-bottom:1px solid #f8f8f8;border-right:1px solid #f4f4f4;"></div>
<div class="t" style="right:513.5px;top:475.9px;font-size:6.3px;line-height:8.19px;color:#444444;text-align:right;">Bus Specs.</div>
<div style="left:90.2px;top:474.6px;width:174.8px;height:9.4px;background:#ececec;border-top:1px solid #c2c2c2;border-left:1px solid #cdcdcd;border-bottom:1px solid #f8f8f8;border-right:1px solid #f4f4f4;"></div>
<div class="t" style="left:93.2px;top:475.78px;font-size:6.35px;line-height:8.25px;color:#363696;">PCI-Express 5.0 (32.0 GT/s)</div>
<div style="left:49.8px;top:486.5px;width:219.5px;height:34.3px;background:#000;"></div>
<div style="left:45.8px;top:531.8px;width:225.2px;height:41.1px;border:1px solid #d4d4d4;box-shadow:inset 1px 1px 0 #fbfbfb, 1px 1px 0 #fbfbfb;"></div>
<div class="t" style="left:48.3px;top:528.9px;font-size:6.3px;line-height:8px;color:#444444;background:#f0f0f0;padding:0 1.5px;">BIOS</div>
<div class="t" style="right:513.3px;top:539.21px;font-size:6.3px;line-height:8.19px;color:#444444;text-align:right;">Brand</div>
<div style="left:90.2px;top:538.1px;width:174.8px;height:9.0px;background:#ececec;border-top:1px solid #c2c2c2;border-left:1px solid #cdcdcd;border-bottom:1px solid #f8f8f8;border-right:1px solid #f4f4f4;"></div>
<div class="t" style="left:93.2px;top:539.01px;font-size:6.45px;line-height:8.38px;color:#363696;">American Megatrends International LLC.</div>
<div class="t" style="right:513.3px;top:549.61px;font-size:6.3px;line-height:8.19px;color:#444444;text-align:right;">Version</div>
<div style="left:90.2px;top:548.5px;width:174.8px;height:9.0px;background:#ececec;border-top:1px solid #c2c2c2;border-left:1px solid #cdcdcd;border-bottom:1px solid #f8f8f8;border-right:1px solid #f4f4f4;"></div>
<div class="t" style="left:93.2px;top:549.5px;font-size:6.3px;line-height:8.19px;color:#363696;">2.06.OC06</div>
<div class="t" style="right:513.3px;top:560.0px;font-size:6.3px;line-height:8.19px;color:#444444;text-align:right;">Date</div>
<div style="left:90.2px;top:558.9px;width:174.8px;height:9.0px;background:#ececec;border-top:1px solid #c2c2c2;border-left:1px solid #cdcdcd;border-bottom:1px solid #f8f8f8;border-right:1px solid #f4f4f4;"></div>
<div class="t" style="left:93.2px;top:559.9px;font-size:6.3px;line-height:8.19px;color:#363696;">10/08/2024</div>
<div style="left:45.8px;top:582.2px;width:225.2px;height:57.8px;border:1px solid #d4d4d4;box-shadow:inset 1px 1px 0 #fbfbfb, 1px 1px 0 #fbfbfb;"></div>
<div class="t" style="left:48.3px;top:579.3px;font-size:6.3px;line-height:8px;color:#444444;background:#f0f0f0;padding:0 1.5px;">Graphic Interface</div>
<div class="t" style="right:490px;top:588.5px;font-size:6.3px;line-height:8.19px;color:#444444;text-align:right;">Bus</div>
<div style="left:115.1px;top:587.8px;width:149.9px;height:8.9px;background:#ececec;border-top:1px solid #c2c2c2;border-left:1px solid #cdcdcd;border-bottom:1px solid #f8f8f8;border-right:1px solid #f4f4f4;"></div>
<div class="t" style="left:95.55px;width:189.9px;top:588.75px;font-size:6.3px;line-height:8.19px;color:#363696;text-align:center;">PCI-Express 3.0</div>
<div style="left:115.1px;top:598.5px;width:84.9px;height:11.5px;background:#ececec;border-top:1px solid #c2c2c2;border-left:1px solid #cdcdcd;border-bottom:1px solid #f8f8f8;border-right:1px solid #f4f4f4;"></div>
<div style="left:203.6px;top:598.5px;width:61.4px;height:11.5px;background:#ececec;border-top:1px solid #c2c2c2;border-left:1px solid #cdcdcd;border-bottom:1px solid #f8f8f8;border-right:1px solid #f4f4f4;"></div>
<div class="m" style="left:0;top:0;width:600px;height:600px;">
<div style="left:293px;top:0px;width:271px;height:597.6px;background:#f7f7f7;"></div>
<div style="left:293px;top:593px;width:271px;height:4.6px;background:#fbfbfb;"></div>
<div style="left:293px;top:0px;width:271px;height:26.3px;background:#656565;"></div>
<div style="left:293px;top:0px;width:271px;height:1.5px;background:#555;"></div>
<div style="left:293px;top:24.8px;width:271px;height:1.5px;background:#545454;"></div>
<div class="t" style="left:301px;top:4.2px;font-size:12px;line-height:20px;color:#50a8e4;transform:scaleX(1.17);transform-origin:0 50%;font-weight:bold;">Run MemTest For LAB</div>
<svg style="position:absolute;left:514px;top:5px" width="20" height="16" viewBox="0 0 20 16"><path d="M1.4 3.1H5.3Q5.8 1.2 7 1.2H12.3Q13.5 1.2 14 3.1H18.6Q19.1 3.1 19.1 3.6V14.3Q19.1 14.8 18.6 14.8H1.4Q0.9 14.8 0.9 14.3V3.6Q0.9 3.1 1.4 3.1Z" fill="none" stroke="#ad6262" stroke-width="1.1"/><circle cx="10" cy="8" r="3.4" fill="none" stroke="#ad6464" stroke-width="2.6"/><circle cx="4" cy="5.4" r="0.7" fill="#ad6262"/></svg>
<div style="left:540px;top:3px;width:21.2px;height:21.5px;background:linear-gradient(135deg,#8e8e8e 0%,#747474 40%,#5e5e5e 75%,#5a5a5a 100%);"></div>
<svg style="position:absolute;left:543.5px;top:6.5px" width="14" height="14" viewBox="0 0 14 14"><path d="M2.8 2.8L12.8 12.8M12.8 2.8L2.8 12.8" stroke="#3c3c3c" stroke-opacity="0.45" stroke-width="3.2" stroke-linecap="round"/><defs><linearGradient id="xg" x1="0" y1="0" x2="1" y2="1"><stop offset="0" stop-color="#f0f0f0"/><stop offset="1" stop-color="#c4c4c4"/></linearGradient></defs><path d="M2 2L12 12M12 2L2 12" stroke="url(#xg)" stroke-width="2.9" stroke-linecap="round"/></svg>
<div style="left:293px;top:26.3px;width:264px;height:566.7px;background:#fdfdfd;"></div>
<div style="left:294px;top:42px;width:6.3px;height:551px;background:#eeeeee;"></div>
<div style="left:300.3px;top:41.4px;width:257.2px;height:551.6px;background:#f8f8f8;border-left:1px solid #e6e6e6;border-top:1px solid #e6e6e6;border-right:1px solid #e4e4e4;"></div>
<div style="left:557.5px;top:42px;width:6.0px;height:551px;background:#efefef;"></div>
<div style="left:301.3px;top:31.3px;width:24.7px;height:10.1px;background:#efefef;"></div>
<div style="left:326.5px;top:31.3px;width:35.3px;height:10.1px;background:#efefef;"></div>
<div style="left:362.7px;top:29.5px;width:27.5px;height:12.9px;background:#f8f8f8;border:1px solid #e0e0e0;border-bottom:none;"></div>
<div class="t" style="left:304px;top:32.45px;font-size:7px;line-height:9.1px;color:#222;transform:scaleX(0.86);transform-origin:0 50%;">Setting</div>
<div class="t" style="left:330.6px;top:32.45px;font-size:7px;line-height:9.1px;color:#222;transform:scaleX(0.895);transform-origin:0 50%;">Advanced</div>
<div class="t" style="left:366.4px;top:31.45px;font-size:7px;line-height:9.1px;color:#222;transform:scaleX(0.93);transform-origin:0 50%;">Monitor</div>
<div class="t" style="left:430.4px;top:30.35px;font-size:7.0px;line-height:9.1px;color:#e46cb2;font-weight:bold;">MyLAB Ver:2020/02/18 MEM-Pro 7.0</div>
<div style="left:305.3px;top:48.8px;width:247.1px;height:35.5px;background:#fff;border:1px solid #acacac;"></div>
<div style="left:358px;top:50px;width:1px;height:13px;background:#ededed;"></div>
<div style="left:408px;top:50px;width:1px;height:13px;background:#ededed;"></div>
<div style="left:455px;top:50px;width:1px;height:13px;background:#ededed;"></div>
<div style="left:517.6px;top:50px;width:1.0px;height:13px;background:#ededed;"></div>
<div class="t" style="left:310px;top:52.92px;font-size:7.2px;line-height:9.36px;color:#222;transform:scaleX(0.95);transform-origin:0 50%;">Total RAM</div>
<div class="t" style="left:310px;top:66.02px;font-size:6.9px;line-height:8.97px;color:#222;transform:scaleX(0.94);transform-origin:0 50%;">48853.2 MB</div>
<div class="t" style="left:362.4px;top:52.92px;font-size:7.2px;line-height:9.36px;color:#222;transform:scaleX(0.95);transform-origin:0 50%;">Using RAM</div>
<div class="t" style="left:362.4px;top:66.02px;font-size:6.9px;line-height:8.97px;color:#222;transform:scaleX(0.94);transform-origin:0 50%;">1020.6 MB</div>
<div class="t" style="left:412px;top:52.92px;font-size:7.2px;line-height:9.36px;color:#222;transform:scaleX(0.95);transform-origin:0 50%;">Run time</div>
<div class="t" style="left:412px;top:66.02px;font-size:6.9px;line-height:8.97px;color:#222;transform:scaleX(0.94);transform-origin:0 50%;">02:00:01</div>
<div class="t" style="left:460px;top:52.92px;font-size:7.2px;line-height:9.36px;color:#222;transform:scaleX(0.95);transform-origin:0 50%;">400% Time left</div>
<div class="t" style="left:460px;top:66.02px;font-size:6.9px;line-height:8.97px;color:#222;transform:scaleX(0.94);transform-origin:0 50%;">00:09:04</div>
<div style="left:305.3px;top:90.4px;width:193.4px;height:487.9px;background:#fff;border:1px solid #acacac;"></div>
<div style="left:333.7px;top:92px;width:1.0px;height:13px;background:#ededed;"></div>
<div style="left:393.6px;top:92px;width:1.0px;height:13px;background:#ededed;"></div>
<div style="left:441px;top:92px;width:1px;height:13px;background:#ededed;"></div>
<div style="left:477px;top:92px;width:1px;height:13px;background:#ededed;"></div>
<div class="t" style="left:309.7px;top:94.48px;font-size:6.8px;line-height:8.84px;color:#222;">#</div>
<div class="t" style="left:337.4px;top:94.48px;font-size:6.8px;line-height:8.84px;color:#222;">Used memory</div>
<div class="t" style="left:399px;top:94.48px;font-size:6.8px;line-height:8.84px;color:#222;">Coverage</div>
<div class="t" style="left:447px;top:94.48px;font-size:6.8px;line-height:8.84px;color:#222;">Errors</div>
<div class="t" style="left:310.1px;top:107.66px;font-size:6.6px;line-height:8.58px;color:#222;"># 00</div>
<div class="t" style="left:337.7px;top:107.69px;font-size:6.55px;line-height:8.52px;color:#222;">1109 MBytes</div>
<div class="t" style="left:397.6px;top:107.72px;font-size:6.5px;line-height:8.45px;color:#222;">305.2%</div>
<div class="t" style="left:445px;top:107.66px;font-size:6.6px;line-height:8.58px;color:#222;">0 Error</div>
<div class="t" style="left:310.1px;top:118.84px;font-size:6.6px;line-height:8.58px;color:#222;"># 01</div>
<div class="t" style="left:337.7px;top:118.87px;font-size:6.55px;line-height:8.52px;color:#222;">1109 MBytes</div>
<div class="t" style="left:397.6px;top:118.91px;font-size:6.5px;line-height:8.45px;color:#222;">328.7%</div>
<div class="t" style="left:445px;top:118.84px;font-size:6.6px;line-height:8.58px;color:#222;">0 Error</div>
<div class="t" style="left:310.1px;top:130.02px;font-size:6.6px;line-height:8.58px;color:#222;"># 02</div>
<div class="t" style="left:337.7px;top:130.05px;font-size:6.55px;line-height:8.52px;color:#222;">1109 MBytes</div>
<div class="t" style="left:397.6px;top:130.08px;font-size:6.5px;line-height:8.45px;color:#222;">327.6%</div>
<div class="t" style="left:445px;top:130.02px;font-size:6.6px;line-height:8.58px;color:#222;">0 Error</div>
<div class="t" style="left:310.1px;top:141.2px;font-size:6.6px;line-height:8.58px;color:#222;"># 03</div>
<div class="t" style="left:337.7px;top:141.23px;font-size:6.55px;line-height:8.52px;color:#222;">1109 MBytes</div>
<div class="t" style="left:397.6px;top:141.26px;font-size:6.5px;line-height:8.45px;color:#222;">312.9%</div>
<div class="t" style="left:445px;top:141.2px;font-size:6.6px;line-height:8.58px;color:#222;">0 Error</div>
<div class="t" style="left:310.1px;top:152.38px;font-size:6.6px;line-height:8.58px;color:#222;"># 04</div>
<div class="t" style="left:337.7px;top:152.41px;font-size:6.55px;line-height:8.52px;color:#222;">1109 MBytes</div>
<div class="t" style="left:397.6px;top:152.44px;font-size:6.5px;line-height:8.45px;color:#222;">344.8%</div>
<div class="t" style="left:445px;top:152.38px;font-size:6.6px;line-height:8.58px;color:#222;">0 Error</div>
<div class="t" style="left:310.1px;top:163.56px;font-size:6.6px;line-height:8.58px;color:#222;"># 05</div>
<div class="t" style="left:337.7px;top:163.59px;font-size:6.55px;line-height:8.52px;color:#222;">1109 MBytes</div>
<div class="t" style="left:397.6px;top:163.62px;font-size:6.5px;line-height:8.45px;color:#222;">364.1%</div>
<div class="t" style="left:445px;top:163.56px;font-size:6.6px;line-height:8.58px;color:#222;">0 Error</div>
<div class="t" style="left:310.1px;top:174.74px;font-size:6.6px;line-height:8.58px;color:#222;"># 06</div>
<div class="t" style="left:337.7px;top:174.77px;font-size:6.55px;line-height:8.52px;color:#222;">1109 MBytes</div>
<div class="t" style="left:397.6px;top:174.81px;font-size:6.5px;line-height:8.45px;color:#222;">306.8%</div>
<div class="t" style="left:445px;top:174.74px;font-size:6.6px;line-height:8.58px;color:#222;">0 Error</div>
<div class="t" style="left:310.1px;top:185.92px;font-size:6.6px;line-height:8.58px;color:#222;"># 07</div>
<div class="t" style="left:337.7px;top:185.95px;font-size:6.55px;line-height:8.52px;color:#222;">1109 MBytes</div>
<div class="t" style="left:397.6px;top:185.98px;font-size:6.5px;line-height:8.45px;color:#222;">334.3%</div>
<div class="t" style="left:445px;top:185.92px;font-size:6.6px;line-height:8.58px;color:#222;">0 Error</div>
<div class="t" style="left:310.1px;top:197.1px;font-size:6.6px;line-height:8.58px;color:#222;"># 08</div>
<div class="t" style="left:337.7px;top:197.13px;font-size:6.55px;line-height:8.52px;color:#222;">1109 MBytes</div>
<div class="t" style="left:397.6px;top:197.16px;font-size:6.5px;line-height:8.45px;color:#222;">332.1%</div>
<div class="t" style="left:445px;top:197.1px;font-size:6.6px;line-height:8.58px;color:#222;">0 Error</div>
<div class="t" style="left:310.1px;top:208.28px;font-size:6.6px;line-height:8.58px;color:#222;"># 09</div>
<div class="t" style="left:337.7px;top:208.31px;font-size:6.55px;line-height:8.52px;color:#222;">1109 MBytes</div>
<div class="t" style="left:397.6px;top:208.34px;font-size:6.5px;line-height:8.45px;color:#222;">360.1%</div>
<div class="t" style="left:445px;top:208.28px;font-size:6.6px;line-height:8.58px;color:#222;">0 Error</div>
<div class="t" style="left:310.1px;top:219.46px;font-size:6.6px;line-height:8.58px;color:#222;"># 10</div>
<div class="t" style="left:337.7px;top:219.49px;font-size:6.55px;line-height:8.52px;color:#222;">1109 MBytes</div>
<div class="t" style="left:397.6px;top:219.52px;font-size:6.5px;line-height:8.45px;color:#222;">396.9%</div>
<div class="t" style="left:445px;top:219.46px;font-size:6.6px;line-height:8.58px;color:#222;">0 Error</div>
<div class="t" style="left:310.1px;top:230.64px;font-size:6.6px;line-height:8.58px;color:#222;"># 11</div>
<div class="t" style="left:337.7px;top:230.67px;font-size:6.55px;line-height:8.52px;color:#222;">1109 MBytes</div>
<div class="t" style="left:397.6px;top:230.7px;font-size:6.5px;line-height:8.45px;color:#222;">332.2%</div>
<div class="t" style="left:445px;top:230.64px;font-size:6.6px;line-height:8.58px;color:#222;">0 Error</div>
<div class="t" style="left:310.1px;top:241.82px;font-size:6.6px;line-height:8.58px;color:#222;"># 12</div>
<div class="t" style="left:337.7px;top:241.85px;font-size:6.55px;line-height:8.52px;color:#222;">1109 MBytes</div>
<div class="t" style="left:397.6px;top:241.88px;font-size:6.5px;line-height:8.45px;color:#222;">307.6%</div>
<div class="t" style="left:445px;top:241.82px;font-size:6.6px;line-height:8.58px;color:#222;">0 Error</div>
<div class="t" style="left:310.1px;top:253.0px;font-size:6.6px;line-height:8.58px;color:#222;"># 13</div>
<div class="t" style="left:337.7px;top:253.03px;font-size:6.55px;line-height:8.52px;color:#222;">1109 MBytes</div>
<div class="t" style="left:397.6px;top:253.06px;font-size:6.5px;line-height:8.45px;color:#222;">336.6%</div>
<div class="t" style="left:445px;top:253.0px;font-size:6.6px;line-height:8.58px;color:#222;">0 Error</div>
<div class="t" style="left:310.1px;top:264.18px;font-size:6.6px;line-height:8.58px;color:#222;"># 14</div>
<div class="t" style="left:337.7px;top:264.21px;font-size:6.55px;line-height:8.52px;color:#222;">1109 MBytes</div>
<div class="t" style="left:397.6px;top:264.25px;font-size:6.5px;line-height:8.45px;color:#222;">326.3%</div>
<div class="t" style="left:445px;top:264.18px;font-size:6.6px;line-height:8.58px;color:#222;">0 Error</div>
<div class="t" style="left:310.1px;top:275.36px;font-size:6.6px;line-height:8.58px;color:#222;"># 15</div>
<div class="t" style="left:337.7px;top:275.39px;font-size:6.55px;line-height:8.52px;color:#222;">1109 MBytes</div>
<div class="t" style="left:397.6px;top:275.42px;font-size:6.5px;line-height:8.45px;color:#222;">338.8%</div>
<div class="t" style="left:445px;top:275.36px;font-size:6.6px;line-height:8.58px;color:#222;">0 Error</div>
<div class="t" style="left:310.1px;top:286.54px;font-size:6.6px;line-height:8.58px;color:#222;"># 16</div>
<div class="t" style="left:337.7px;top:286.57px;font-size:6.55px;line-height:8.52px;color:#222;">1109 MBytes</div>
<div class="t" style="left:397.6px;top:286.61px;font-size:6.5px;line-height:8.45px;color:#222;">382.6%</div>
<div class="t" style="left:445px;top:286.54px;font-size:6.6px;line-height:8.58px;color:#222;">0 Error</div>
<div class="t" style="left:310.1px;top:297.72px;font-size:6.6px;line-height:8.58px;color:#222;"># 17</div>
<div class="t" style="left:337.7px;top:297.75px;font-size:6.55px;line-height:8.52px;color:#222;">1109 MBytes</div>
<div class="t" style="left:397.6px;top:297.78px;font-size:6.5px;line-height:8.45px;color:#222;">347.9%</div>
<div class="t" style="left:445px;top:297.72px;font-size:6.6px;line-height:8.58px;color:#222;">0 Error</div>
<div class="t" style="left:310.1px;top:308.9px;font-size:6.6px;line-height:8.58px;color:#222;"># 18</div>
<div class="t" style="left:337.7px;top:308.93px;font-size:6.55px;line-height:8.52px;color:#222;">1109 MBytes</div>
<div class="t" style="left:397.6px;top:308.97px;font-size:6.5px;line-height:8.45px;color:#222;">349.7%</div>
<div class="t" style="left:445px;top:308.9px;font-size:6.6px;line-height:8.58px;color:#222;">0 Error</div>
<div class="t" style="left:310.1px;top:320.08px;font-size:6.6px;line-height:8.58px;color:#222;"># 19</div>
<div class="t" style="left:337.7px;top:320.11px;font-size:6.55px;line-height:8.52px;color:#222;">1109 MBytes</div>
<div class="t" style="left:397.6px;top:320.14px;font-size:6.5px;line-height:8.45px;color:#222;">332.1%</div>
<div class="t" style="left:445px;top:320.08px;font-size:6.6px;line-height:8.58px;color:#222;">0 Error</div>
<div class="t" style="left:310.1px;top:331.26px;font-size:6.6px;line-height:8.58px;color:#222;"># 20</div>
<div class="t" style="left:337.7px;top:331.29px;font-size:6.55px;line-height:8.52px;color:#222;">1109 MBytes</div>
<div class="t" style="left:397.6px;top:331.32px;font-size:6.5px;line-height:8.45px;color:#222;">340.3%</div>
<div class="t" style="left:445px;top:331.26px;font-size:6.6px;line-height:8.58px;color:#222;">0 Error</div>
<div class="t" style="left:310.1px;top:342.44px;font-size:6.6px;line-height:8.58px;color:#222;"># 21</div>
<div class="t" style="left:337.7px;top:342.47px;font-size:6.55px;line-height:8.52px;color:#222;">1109 MBytes</div>
<div class="t" style="left:397.6px;top:342.5px;font-size:6.5px;line-height:8.45px;color:#222;">329.9%</div>
<div class="t" style="left:445px;top:342.44px;font-size:6.6px;line-height:8.58px;color:#222;">0 Error</div>
<div class="t" style="left:310.1px;top:353.62px;font-size:6.6px;line-height:8.58px;color:#222;"># 22</div>
<div class="t" style="left:337.7px;top:353.65px;font-size:6.55px;line-height:8.52px;color:#222;">1109 MBytes</div>
<div class="t" style="left:397.6px;top:353.68px;font-size:6.5px;line-height:8.45px;color:#222;">332.7%</div>
<div class="t" style="left:445px;top:353.62px;font-size:6.6px;line-height:8.58px;color:#222;">0 Error</div>
<div class="t" style="left:310.1px;top:364.8px;font-size:6.6px;line-height:8.58px;color:#222;"># 23</div>
<div class="t" style="left:337.7px;top:364.83px;font-size:6.55px;line-height:8.52px;color:#222;">1109 MBytes</div>
<div class="t" style="left:397.6px;top:364.87px;font-size:6.5px;line-height:8.45px;color:#222;">327.9%</div>
<div class="t" style="left:445px;top:364.8px;font-size:6.6px;line-height:8.58px;color:#222;">0 Error</div>
<div class="t" style="left:310.1px;top:375.98px;font-size:6.6px;line-height:8.58px;color:#222;"># 24</div>
<div class="t" style="left:337.7px;top:376.01px;font-size:6.55px;line-height:8.52px;color:#222;">1109 MBytes</div>
<div class="t" style="left:397.6px;top:376.04px;font-size:6.5px;line-height:8.45px;color:#222;">326.8%</div>
<div class="t" style="left:445px;top:375.98px;font-size:6.6px;line-height:8.58px;color:#222;">0 Error</div>
<div class="t" style="left:310.1px;top:387.16px;font-size:6.6px;line-height:8.58px;color:#222;"># 25</div>
<div class="t" style="left:337.7px;top:387.19px;font-size:6.55px;line-height:8.52px;color:#222;">1109 MBytes</div>
<div class="t" style="left:397.6px;top:387.23px;font-size:6.5px;line-height:8.45px;color:#222;">348.6%</div>
<div class="t" style="left:445px;top:387.16px;font-size:6.6px;line-height:8.58px;color:#222;">0 Error</div>
<div class="t" style="left:310.1px;top:398.34px;font-size:6.6px;line-height:8.58px;color:#222;"># 26</div>
<div class="t" style="left:337.7px;top:398.37px;font-size:6.55px;line-height:8.52px;color:#222;">1109 MBytes</div>
<div class="t" style="left:397.6px;top:398.4px;font-size:6.5px;line-height:8.45px;color:#222;">360.7%</div>
<div class="t" style="left:445px;top:398.34px;font-size:6.6px;line-height:8.58px;color:#222;">0 Error</div>
<div class="t" style="left:310.1px;top:409.52px;font-size:6.6px;line-height:8.58px;color:#222;"># 27</div>
<div class="t" style="left:337.7px;top:409.55px;font-size:6.55px;line-height:8.52px;color:#222;">1109 MBytes</div>
<div class="t" style="left:397.6px;top:409.59px;font-size:6.5px;line-height:8.45px;color:#222;">348.3%</div>
<div class="t" style="left:445px;top:409.52px;font-size:6.6px;line-height:8.58px;color:#222;">0 Error</div>
<div class="t" style="left:310.1px;top:420.7px;font-size:6.6px;line-height:8.58px;color:#222;"># 28</div>
<div class="t" style="left:337.7px;top:420.73px;font-size:6.55px;line-height:8.52px;color:#222;">1109 MBytes</div>
<div class="t" style="left:397.6px;top:420.76px;font-size:6.5px;line-height:8.45px;color:#222;">328.7%</div>
<div class="t" style="left:445px;top:420.7px;font-size:6.6px;line-height:8.58px;color:#222;">0 Error</div>
<div class="t" style="left:310.1px;top:431.88px;font-size:6.6px;line-height:8.58px;color:#222;"># 29</div>
<div class="t" style="left:337.7px;top:431.91px;font-size:6.55px;line-height:8.52px;color:#222;">1109 MBytes</div>
<div class="t" style="left:397.6px;top:431.94px;font-size:6.5px;line-height:8.45px;color:#222;">376.4%</div>
<div class="t" style="left:445px;top:431.88px;font-size:6.6px;line-height:8.58px;color:#222;">0 Error</div>
<div class="t" style="left:310.1px;top:443.06px;font-size:6.6px;line-height:8.58px;color:#222;"># 30</div>
<div class="t" style="left:337.7px;top:443.09px;font-size:6.55px;line-height:8.52px;color:#222;">1109 MBytes</div>
<div class="t" style="left:397.6px;top:443.12px;font-size:6.5px;line-height:8.45px;color:#222;">357.7%</div>
<div class="t" style="left:445px;top:443.06px;font-size:6.6px;line-height:8.58px;color:#222;">0 Error</div>
<div class="t" style="left:310.1px;top:454.24px;font-size:6.6px;line-height:8.58px;color:#222;"># 31</div>
<div class="t" style="left:337.7px;top:454.27px;font-size:6.55px;line-height:8.52px;color:#222;">1109 MBytes</div>
<div class="t" style="left:397.6px;top:454.3px;font-size:6.5px;line-height:8.45px;color:#222;">358.1%</div>
<div class="t" style="left:445px;top:454.24px;font-size:6.6px;line-height:8.58px;color:#222;">0 Error</div>
<div class="t" style="left:310.1px;top:465.42px;font-size:6.6px;line-height:8.58px;color:#222;"># 32</div>
<div class="t" style="left:337.7px;top:465.45px;font-size:6.55px;line-height:8.52px;color:#222;">1109 MBytes</div>
<div class="t" style="left:397.6px;top:465.49px;font-size:6.5px;line-height:8.45px;color:#222;">360.6%</div>
<div class="t" style="left:445px;top:465.42px;font-size:6.6px;line-height:8.58px;color:#222;">0 Error</div>
<div class="t" style="left:310.1px;top:476.6px;font-size:6.6px;line-height:8.58px;color:#222;"># 33</div>
<div class="t" style="left:337.7px;top:476.63px;font-size:6.55px;line-height:8.52px;color:#222;">1109 MBytes</div>
<div class="t" style="left:397.6px;top:476.66px;font-size:6.5px;line-height:8.45px;color:#222;">370.3%</div>
<div class="t" style="left:445px;top:476.6px;font-size:6.6px;line-height:8.58px;color:#222;">0 Error</div>
<div class="t" style="left:310.1px;top:487.78px;font-size:6.6px;line-height:8.58px;color:#222;"># 34</div>
<div class="t" style="left:337.7px;top:487.81px;font-size:6.55px;line-height:8.52px;color:#222;">1109 MBytes</div>
<div class="t" style="left:397.6px;top:487.85px;font-size:6.5px;line-height:8.45px;color:#222;">310.4%</div>
<div class="t" style="left:445px;top:487.78px;font-size:6.6px;line-height:8.58px;color:#222;">0 Error</div>
<div class="t" style="left:310.1px;top:498.96px;font-size:6.6px;line-height:8.58px;color:#222;"># 35</div>
<div class="t" style="left:337.7px;top:498.99px;font-size:6.55px;line-height:8.52px;color:#222;">1109 MBytes</div>
<div class="t" style="left:397.6px;top:499.02px;font-size:6.5px;line-height:8.45px;color:#222;">338.9%</div>
<div class="t" style="left:445px;top:498.96px;font-size:6.6px;line-height:8.58px;color:#222;">0 Error</div>
<div class="t" style="left:310.1px;top:510.14px;font-size:6.6px;line-height:8.58px;color:#222;"># 36</div>
<div class="t" style="left:337.7px;top:510.17px;font-size:6.55px;line-height:8.52px;color:#222;">1109 MBytes</div>
<div class="t" style="left:397.6px;top:510.21px;font-size:6.5px;line-height:8.45px;color:#222;">365.8%</div>
<div class="t" style="left:445px;top:510.14px;font-size:6.6px;line-height:8.58px;color:#222;">0 Error</div>
<div class="t" style="left:310.1px;top:521.32px;font-size:6.6px;line-height:8.58px;color:#222;"># 37</div>
<div class="t" style="left:337.7px;top:521.35px;font-size:6.55px;line-height:8.52px;color:#222;">1109 MBytes</div>
<div class="t" style="left:397.6px;top:521.38px;font-size:6.5px;line-height:8.45px;color:#222;">409.7%</div>
<div class="t" style="left:445px;top:521.32px;font-size:6.6px;line-height:8.58px;color:#222;">0 Error</div>
<div class="t" style="left:310.1px;top:532.5px;font-size:6.6px;line-height:8.58px;color:#222;"># 38</div>
<div class="t" style="left:337.7px;top:532.53px;font-size:6.55px;line-height:8.52px;color:#222;">1109 MBytes</div>
<div class="t" style="left:397.6px;top:532.56px;font-size:6.5px;line-height:8.45px;color:#222;">318.9%</div>
<div class="t" style="left:445px;top:532.5px;font-size:6.6px;line-height:8.58px;color:#222;">0 Error</div>
<div class="t" style="left:310.1px;top:543.68px;font-size:6.6px;line-height:8.58px;color:#222;"># 39</div>
<div class="t" style="left:337.7px;top:543.71px;font-size:6.55px;line-height:8.52px;color:#222;">1109 MBytes</div>
<div class="t" style="left:397.6px;top:543.75px;font-size:6.5px;line-height:8.45px;color:#222;">371.9%</div>
<div class="t" style="left:445px;top:543.68px;font-size:6.6px;line-height:8.58px;color:#222;">0 Error</div>
<div style="left:506px;top:91.5px;width:45.7px;height:27.4px;background:#f6f6f6;border:1px solid #d8d8d8;border-radius:2px;"></div>
<div style="left:506px;top:126.4px;width:45.7px;height:27.8px;background:#f6f6f6;border:1px solid #d8d8d8;border-radius:2px;"></div>
<div class="t" style="left:507.8px;top:101.35px;font-size:7.0px;line-height:9.1px;color:#222;transform:scaleX(0.867);transform-origin:0 50%;">Close Memtest</div>
<div class="t" style="left:512.2px;top:133.05px;font-size:7.0px;line-height:9.1px;color:#222;transform:scaleX(0.867);transform-origin:0 50%;">Close +</div>
<div class="t" style="right:52.2px;top:133.05px;font-size:7.0px;line-height:9.1px;color:#222;text-align:right;transform:scaleX(0.867);transform-origin:100% 50%;">Prt</div>
<div class="t" style="left:510.7px;top:140.85px;font-size:7.0px;line-height:9.1px;color:#222;transform:scaleX(0.88);transform-origin:0 50%;">Scn Memtest</div>
<div class="t" style="left:505.5px;top:158.85px;font-size:7.0px;line-height:9.1px;color:#222;transform:scaleX(0.857);transform-origin:0 50%;">All Error Counts:</div>
<div class="t" style="left:507px;top:169.85px;font-size:7.0px;line-height:9.1px;color:#222;transform:scaleX(0.84);transform-origin:0 50%;">0 Errors</div>
</div>
</div></body></html>
